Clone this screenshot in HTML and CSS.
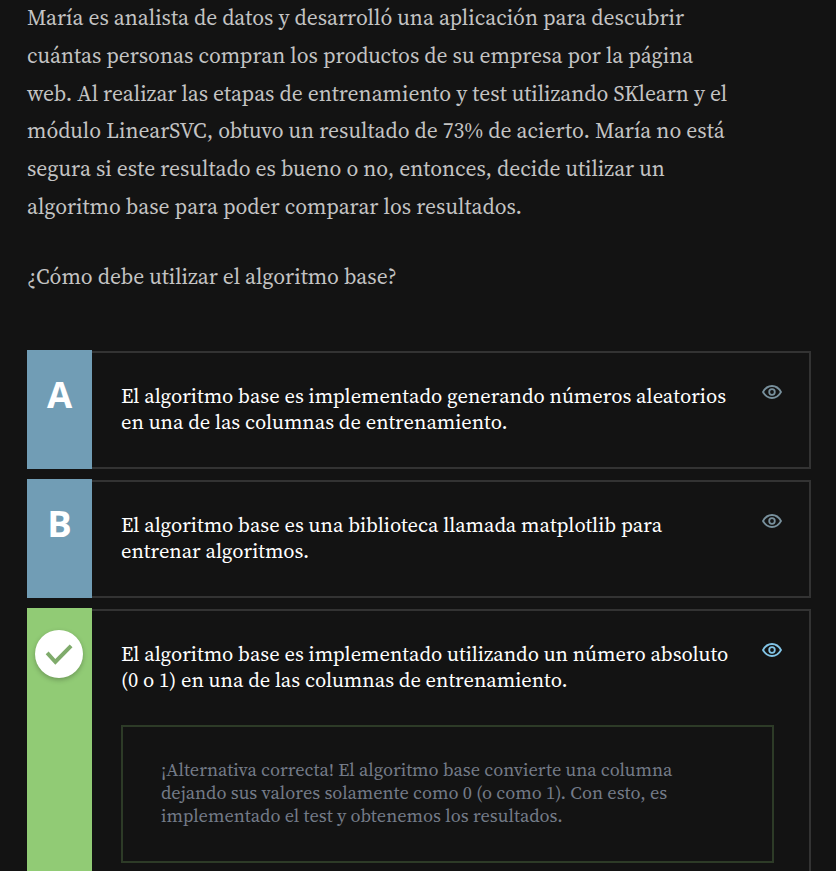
FILE: index.html
```html
<!DOCTYPE html>
<html lang="es">
<head>
<meta charset="utf-8">
<title>Ejercicio</title>
<link rel="stylesheet" href="styles.css">
</head>
<body>
<svg class="sprite" aria-hidden="true">
  <symbol id="eye" viewBox="0 0 20 14"><path d="M1 7C3.300 2.900 6.300 1 10 1S16.700 2.900 19 7C16.700 11.100 13.700 13 10 13S3.300 11.100 1 7Z"/><circle cx="10" cy="7" r="2.800"/></symbol>
</svg>
<main class="exercise">
  <div class="statement">
    <p><span>María es analista de datos y desarrolló una aplicación para descubrir</span>
    <span>cuántas personas compran los productos de su empresa por la página</span>
    <span>web. Al realizar las etapas de entrenamiento y test utilizando SKlearn y el</span>
    <span>módulo LinearSVC, obtuvo un resultado de 73% de acierto. María no está</span>
    <span>segura si este resultado es bueno o no, entonces, decide utilizar un</span>
    <span>algoritmo base para poder comparar los resultados.</span></p>
    <p><span>¿Cómo debe utilizar el algoritmo base?</span></p>
  </div>
  <ul class="options">
    <li class="option">
      <div class="mark">A</div>
      <div class="card">
        <p class="answer"><span>El algoritmo base es implementado generando números aleatorios</span>
        <span>en una de las columnas de entrenamiento.</span></p>
        <svg class="eye"><use href="#eye"/></svg>
      </div>
    </li>
    <li class="option">
      <div class="mark">B</div>
      <div class="card">
        <p class="answer"><span>El algoritmo base es una biblioteca llamada matplotlib para</span>
        <span>entrenar algoritmos.</span></p>
        <svg class="eye"><use href="#eye"/></svg>
      </div>
    </li>
    <li class="option correct">
      <div class="mark"><div class="check"><svg viewBox="0 0 48 48"><path d="M10.700 24.300 20.300 34.700 37.500 17.200 34.700 14.600 20.300 29 13.600 21.600Z"/></svg></div></div>
      <div class="card">
        <p class="answer"><span>El algoritmo base es implementado utilizando un número absoluto</span>
        <span>(0 o 1) en una de las columnas de entrenamiento.</span></p>
        <svg class="eye"><use href="#eye"/></svg>
        <p class="feedback"><span>¡Alternativa correcta! El algoritmo base convierte una columna</span>
        <span>dejando sus valores solamente como 0 (o como 1). Con esto, es</span>
        <span>implementado el test y obtenemos los resultados.</span></p>
      </div>
    </li>
  </ul>
</main>
</body>
</html>
```
FILE: styles.css
```css
* { box-sizing: border-box; }
html { overflow: hidden; }
body { margin: 0; height: 871px; overflow: hidden; background: #131313; font-family: "Source Serif Pro", "Source Serif 4", "Liberation Serif", serif; }
p, ul { margin: 0; padding: 0; }
p span { display: block; width: max-content; white-space: nowrap; }
.sprite { display: none; }
.exercise { width: 784px; margin: -1px 0 0 27px; }
.statement { color: #c4c4c4; font-size: 21.570px; line-height: 37.8px; }
.statement p + p { margin-top: 32px; }
.options { list-style: none; margin-top: 54.400px; display: grid; gap: 10px; }
.option { display: grid; grid-template-columns: 65px 1fr; min-height: 119px; }
.mark { background: #719db5; color: #fff; font: bold 36.500px/44px "Open Sans", sans-serif; text-align: center; padding-top: 22px; }
.card { margin-top: 1px; border: 2px solid #333; border-left: 0; padding: 30px 35px 0 29px; display: grid; grid-template-columns: 1fr auto; align-content: start; }
.answer { color: #fff; font-size: 20.490px; line-height: 26px; }
.eye { width: 20px; height: 14px; margin: 2px -8px 0 0; fill: none; stroke: #78909c; stroke-width: 1.800; }
.correct { min-height: 300px; }
.correct .mark { padding-top: 22px; background: #91cb75; }
.correct .eye { stroke: #82c4e6; }
.check { width: 48px; height: 48px; margin: 0 auto 0 8px; border-radius: 50%; background: #fff; box-shadow: 0 2px 5px rgba(0,0,0,.25); }
.check svg { display: block; width: 48px; height: 48px; fill: #7fab6b; }
.feedback { grid-column: 1 / -1; margin-top: 32px; height: 138px; border: 2px solid #2d3b27; padding: 31px 0 0 38px; color: #747b88; font-size: 18.310px; line-height: 23px; }
```
